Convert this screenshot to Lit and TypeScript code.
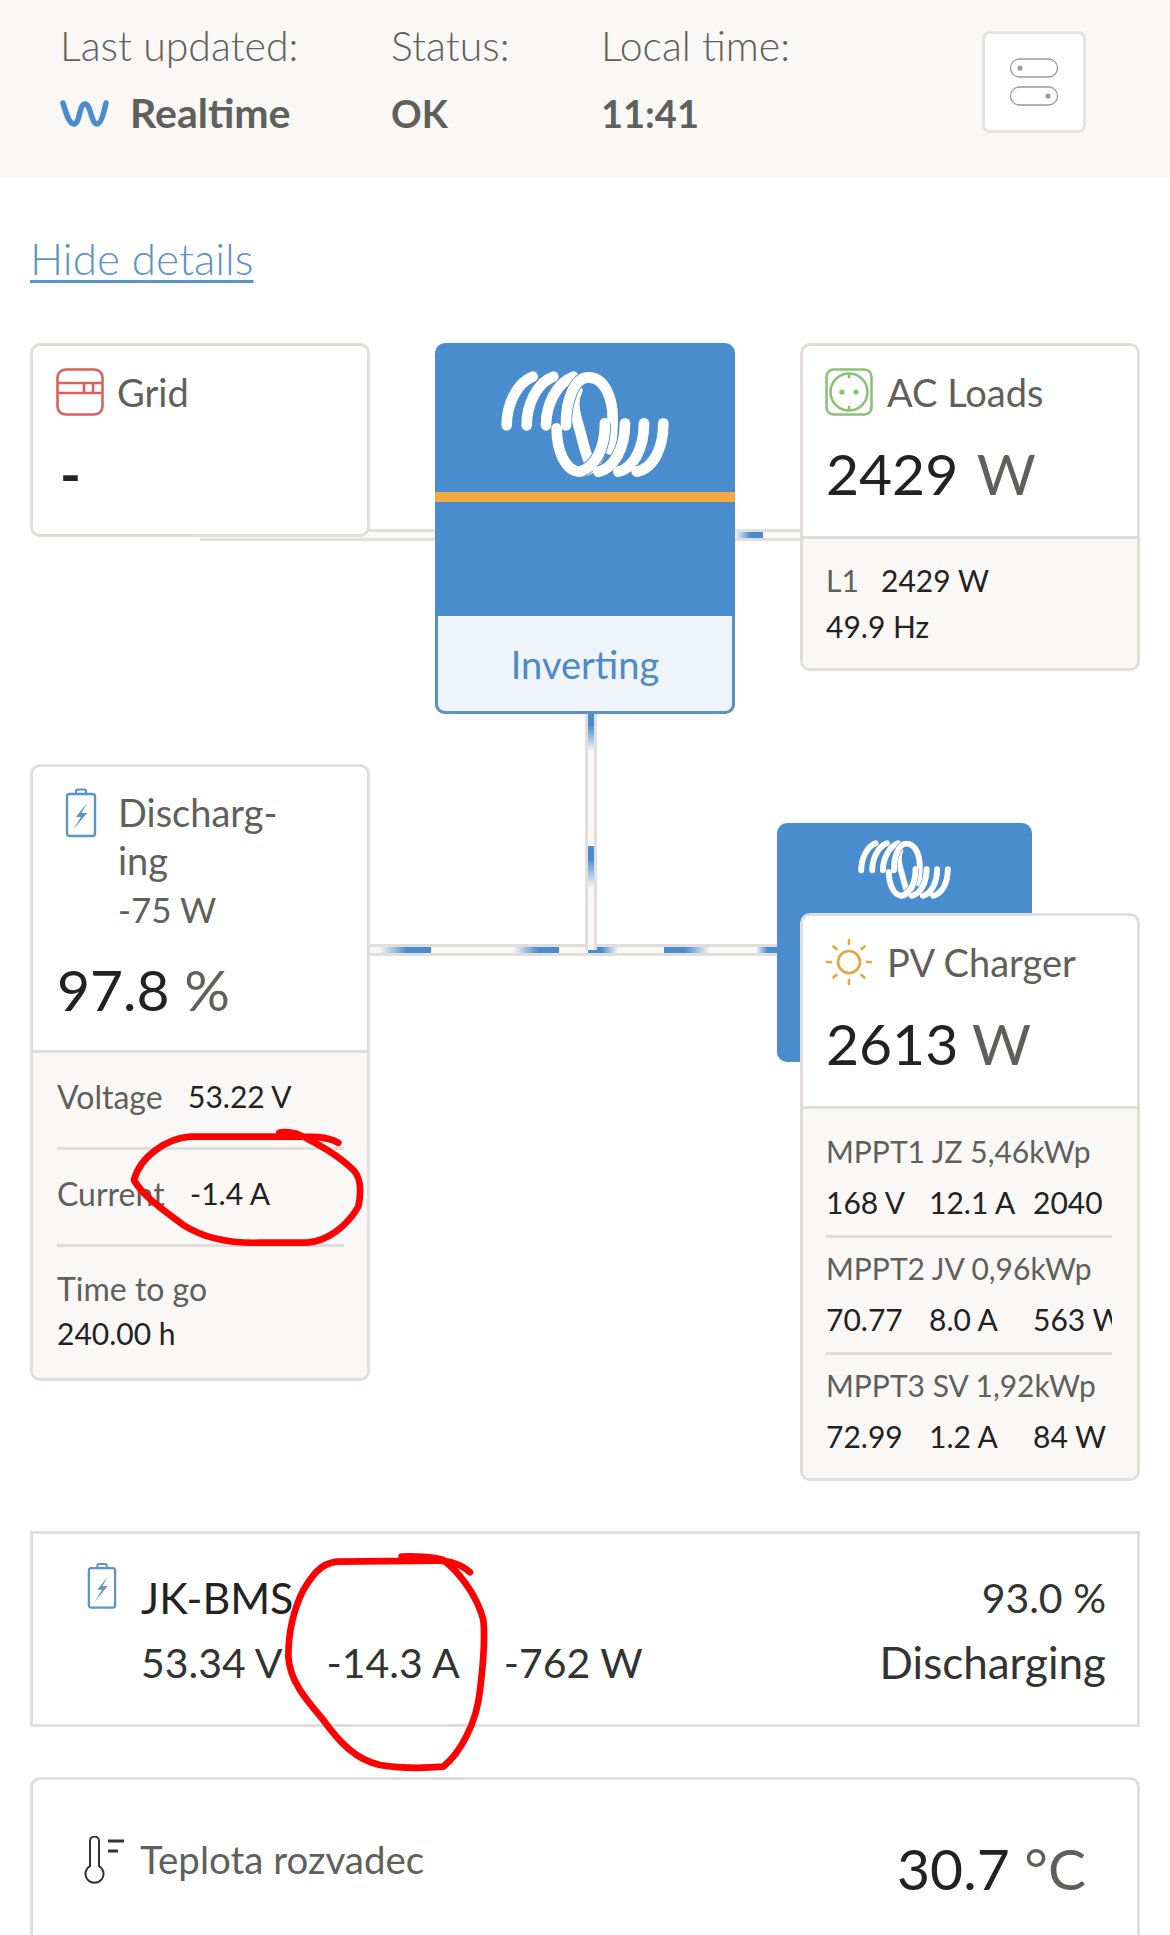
import { LitElement, html, css, svg } from "lit";
import { customElement } from "lit/decorators.js";

const logo = (cls: string) => {
  const strokes = [
    "M50 196 C50 135 80 68 128 50",
    "M110 196 C110 135 140 68 190 50",
    "M168 196 C168 135 200 68 250 50",
    "M200 205 C200 270 225 335 272 335 C315 335 346 270 345 190",
    "M262 92 C240 130 262 180 272 220 C282 260 290 290 300 312",
    "M228 196 C226 120 255 52 295 52 C345 52 368 115 368 175 C368 205 366 240 360 268",
    "M345 190 C345 262 318 320 270 335",
    "M405 190 C405 265 372 325 325 335",
    "M462 190 C462 265 430 325 385 335",
    "M520 190 C520 265 490 325 440 335",
  ];
  return html`<svg class=${cls} viewBox="0 0 570 390" fill="none" stroke-linecap="round">
    ${strokes.map(
      (d) => svg`<path d=${d} stroke="#4a8dce" stroke-width="37" stroke-linecap="butt"></path><path d=${d} stroke="#fff" stroke-width="32"></path>`
    )}
  </svg>`;
};

const batteryIcon = (cls: string) => html`<svg class=${cls} viewBox="0 0 32 50" fill="none">
  <path d="M11 6V3.5a2 2 0 0 1 2-2h6a2 2 0 0 1 2 2V6" stroke="#5b94c6" stroke-width="2.2"></path>
  <rect x="2" y="6" width="28" height="42" rx="2.5" stroke="#5b94c6" stroke-width="2.4"></rect>
  <path d="M22 15 L11 29 H16 L8 42 L22 25 H16.5 Z" fill="#5b94c6"></path>
</svg>`;

@customElement("app-root")
export class AppRoot extends LitElement {
  static styles = css`
    :host {
      display: block;
      position: relative;
      height: 1935px;
      overflow: hidden;
      background: #fff;
      font-family: "Lato", "Noto Sans", sans-serif;
      color: #222;
      box-sizing: border-box;
    }
    * { box-sizing: border-box; }
    .top {
      height: 177px;
      background: #f9f8f6;
      display: flex;
      padding: 24px 84px 0 60px;
      color: #5f5f5c;
      position: relative;
    }
    .col { display: flex; flex-direction: column; gap: 23px; font-size: 41px; font-weight: 300; line-height: 44px; }
    .col b { font-weight: 700; color: #5f5f5c; display: flex; align-items: center; gap: 21px; }
    .num { font-size: 38px; }
    .c1 { width: 331px; }
    .c2 { width: 210px; }
    .wave { width: 49px; height: 28px; }
    .toggle {
      margin-left: auto;
      margin-top: 7px;
      width: 104px;
      height: 102px;
      background: #fff;
      border: 3px solid #e4e3df;
      border-radius: 8px;
      display: flex;
      align-items: center;
      justify-content: center;
    }
    .toggle svg { width: 50px; height: 50px; }
    .hide {
      display: block;
      margin: 56px 0 0 30px;
      width: max-content;
      font-size: 44px;
      line-height: 50px;
      font-weight: 300;
      color: #5b94c6;
      text-decoration: underline;
      text-decoration-thickness: 3px;
      text-underline-offset: 5px;
    }
    .diagram {
      position: relative;
      margin-top: 60px;
      padding: 0 30px;
      display: grid;
      grid-template-columns: 340px 1fr 340px;
      height: 1138px;
      align-items: start;
    }
    .wire {
      position: absolute;
      background: #f9f8f6;
      border: 0 solid #e0dfdb;
      overflow: hidden;
    }
    .h { height: 12px; border-width: 3px 0; }
    .v { width: 12px; border-width: 0 3px; }
    .w1 { left: 200px; width: 235px; top: 186px; }
    .w2 { left: 735px; width: 65px; top: 186px; }
    .w3 { left: 370px; width: 407px; top: 601px; }
    .w4 { left: 585px; top: 371px; height: 236px; }
    .dash { position: absolute; top: 0; bottom: 0; }
    .v .dash { top: auto; bottom: auto; left: 0; right: 0; }
    .left, .right { display: flex; flex-direction: column; position: relative; }
    .left { gap: 227px; }
    .right { gap: 242px; }
    .card {
      position: relative;
      background: #fff;
      border: 3px solid #dfdedb;
      border-radius: 10px;
      overflow: hidden;
    }
    .head { padding: 22px 22px 0; display: flex; gap: 14px; align-items: flex-start; }
    .grid-card .head { padding-left: 23px; gap: 13px; }
    .icon { width: 48px; height: 48px; flex: none; }
    .name { font-size: 38px; line-height: 48px; color: #5f5f5c; font-weight: 400; }
    .name small { font-size: 35px; }
    .val { font-size: 57px; line-height: 72px; padding-left: 23px; font-weight: 400; color: #222; }
    .val span { color: #5f5f5c; font-weight: 400; }
    .ac .val span { margin-left: 4px; }
    .grid-card { height: 194px; }
    .grid-card .val { margin-top: 22px; padding-left: 27px; font-weight: 700; font-size: 56px; }
    .ac .val { margin-top: 21px; }
    .ac .top-part { height: 190px; }
    .sub {
      background: #f9f8f6;
      border-top: 3px solid #dfdedb;
      font-size: 30px;
      color: #222;
    }
    .muted { color: #5f5f5c; }
    .ac .sub { height: 132px; padding: 18px 23px 0; line-height: 46px; }
    .ac .sub .muted { display: inline-block; width: 55px; }
    .inverter {
      margin-left: 65px;
      width: 300px;
      height: 371px;
      position: relative;
      background: #4a8dce;
      border-radius: 10px;
      display: flex;
      flex-direction: column;
      overflow: hidden;
    }
    .inv-top { height: 159px; flex: none; border-bottom: 10px solid #f4a840; display: flex; justify-content: center; }
    .logo-big { width: 190px; height: 130px; margin-top: 17px; }
    .inv-mid { height: 114px; flex: none; }
    .inv-status {
      flex: 1;
      background: #eff4fb;
      color: #4e8ac4;
      font-size: 38px;
      display: flex;
      align-items: center;
      justify-content: center;
      border: 3px solid #5b90c4;
      border-top: 0;
      border-radius: 0 0 10px 10px;
    }
    .pv-wrap { position: relative; }
    .pv-blue {
      position: absolute;
      left: -23px;
      top: -90px;
      width: 255px;
      height: 239px;
      background: #4a8dce;
      border-radius: 10px;
      display: flex;
      justify-content: center;
    }
    .logo-small { width: 105px; height: 72px; margin-top: 11px; }
    .batt .head { padding: 21px 23px 0 32px; gap: 21px; }
    .batt .icon-b { width: 32px; height: 50px; flex: none; }
    .batt .name { line-height: 48px; }
    .batt .top-part { height: 283px; }
    .batt .val { margin-top: 20px; padding-left: 24px; }
    .batt .sub { padding: 0 23px 0 24px; height: 328px; }
    .kv { height: 97px; border-bottom: 3px solid #dfdedb; display: flex; align-items: center; padding-bottom: 8px; }
    .kv .muted { width: 131px; font-size: 32px; }
    .kv.second .muted { width: 133px; }
    .ttg { padding-top: 19px; line-height: 45px; }
    .ttg .muted { font-size: 32px; }
    .pv { z-index: 1; }
    .pv .top-part { height: 190px; }
    .pv .val { margin-top: 21px; }
    .pv .sub { padding: 21px 23px 0; height: 372px; }
    .mppt { border-bottom: 3px solid #dfdedb; height: 108px; margin-bottom: 9px; width: 286px; overflow: hidden; }
    .mppt:last-child { border-bottom: 0; }
    .mppt .muted { line-height: 42px; white-space: nowrap; }
    .mppt .vals { display: grid; grid-template-columns: 103px 104px 200px; line-height: 42px; white-space: nowrap; margin-top: 9px; }
    .bms {
      margin: 50px 30px 0;
      height: 196px;
      border: 3px solid #dfdedb;
      display: grid;
      grid-template-columns: 1fr auto;
      padding: 28px 31px 0 54px;
      font-size: 41px;
      line-height: 65px;
      font-weight: 400;
      color: #333;
    }
    .bms-left { display: flex; gap: 24px; }
    .bms-left .icon-b { width: 30px; height: 48px; flex: none; }
    .bms .n { font-size: 43px; margin-top: 3px; color: #222; }
    .bms .line { display: flex; gap: 44px; }
    .bms-right { text-align: right; margin-top: 3px; }
    .bms-right .state { font-size: 44px; }
    .temp {
      margin: 50px 30px 0;
      height: 300px;
      border: 3px solid #dfdedb;
      border-radius: 10px;
      display: flex;
      justify-content: space-between;
      padding: 51px 51px 0 51px;
    }
    .temp-left { display: flex; gap: 14px; font-size: 38.5px; color: #5f5f5c; line-height: 56px; }
    .temp-left svg { width: 42px; height: 50px; margin-top: 5px; }
    .temp .v2 { font-size: 57px; line-height: 72px; margin-top: 1px; }
    .temp .v2 span { color: #5f5f5c; }
    .ink { position: absolute; pointer-events: none; z-index: 5; }
    .ink1 { left: 120px; top: 1120px; width: 260px; height: 150px; }
    .ink2 { left: 280px; top: 1540px; width: 220px; height: 240px; }
  `;

  render() {
    const blue = "#4a8bcc";
    const dashH = (l: number, w: number, dir: string) =>
      html`<i class="dash" style="left:${l}px;width:${w}px;background:linear-gradient(${dir},${blue} 45%,rgba(74,139,204,0))"></i>`;
    const dashV = (t: number, h: number, dir: string) =>
      html`<i class="dash" style="top:${t}px;height:${h}px;background:linear-gradient(${dir},${blue} 30%,rgba(74,139,204,0))"></i>`;
    return html`
      <div class="top">
        <div class="col c1">
          <div>Last updated:</div>
          <b>
            <svg class="wave" viewBox="0 0 49 28" fill="none"><path d="M3 4 C6 14 9 25 14 25 C20 25 19 5 25 5 C31 5 31 25 37 25 C41 25 44 13 46 4" stroke="#4a8dce" stroke-width="5.5" stroke-linecap="round"></path></svg>
            Realtime
          </b>
        </div>
        <div class="col c2"><div>Status:</div><b class="num">OK</b></div>
        <div class="col"><div>Local time:</div><b class="num">11:41</b></div>
        <div class="toggle">
          <svg viewBox="0 0 50 50" fill="none" stroke="#999" stroke-width="1.3">
            <rect x="1.5" y="2" width="47" height="18" rx="9"></rect>
            <circle cx="11" cy="11" r="2.6" fill="#999" stroke="none"></circle>
            <rect x="1.5" y="30" width="47" height="18" rx="9"></rect>
            <circle cx="39" cy="39" r="2.6" fill="#999" stroke="none"></circle>
          </svg>
        </div>
      </div>

      <a class="hide">Hide details</a>

      <div class="diagram">
        <div class="wire h w1"></div>
        <div class="wire h w2">${dashH(0, 28, "to left")}</div>
        <div class="wire h w3">
          ${dashH(9, 52, "to left")}${dashH(143, 46, "to left")}
          ${dashH(218, 30, "to right")}${dashH(294, 46, "to right")}${dashH(386, 21, "to left")}
        </div>
        <div class="wire v w4">${dashV(0, 37, "to bottom")}${dashV(132, 42, "to bottom")}</div>

        <div class="left">
          <div class="card grid-card">
            <div class="head">
              <svg class="icon" viewBox="0 0 48 48" fill="none" stroke="#d9605c" stroke-width="2.6">
                <rect x="1.5" y="1.5" width="45" height="45" rx="8"></rect>
                <path d="M1.5 15H46.5M1.5 25H46.5M28 15V25M37 15V25"></path>
              </svg>
              <div class="name">Grid</div>
            </div>
            <div class="val">-</div>
          </div>
          <div class="card batt">
            <div class="top-part">
              <div class="head">
                ${batteryIcon("icon-b")}
                <div class="name">Discharg-<br />ing<br /><small>-75 W</small></div>
              </div>
              <div class="val">97.8 <span>%</span></div>
            </div>
            <div class="sub">
              <div class="kv"><span class="muted">Voltage</span><span>53.22 V</span></div>
              <div class="kv second"><span class="muted">Current</span><span>-1.4 A</span></div>
              <div class="ttg"><div class="muted">Time to go</div><div>240.00 h</div></div>
            </div>
          </div>
        </div>

        <div class="inverter">
          <div class="inv-top">${logo("logo-big")}</div>
          <div class="inv-mid"></div>
          <div class="inv-status">Inverting</div>
        </div>

        <div class="right">
          <div class="card ac">
            <div class="top-part">
              <div class="head">
                <svg class="icon" viewBox="0 0 48 48" fill="none" stroke="#8cc277" stroke-width="2.6">
                  <rect x="1.5" y="1.5" width="45" height="45" rx="7"></rect>
                  <circle cx="24" cy="24" r="18.5"></circle>
                  <path d="M24 5.5V10M24 38V42.5"></path>
                  <circle cx="17" cy="24" r="2.6" fill="#8cc277" stroke="none"></circle>
                  <circle cx="31" cy="24" r="2.6" fill="#8cc277" stroke="none"></circle>
                </svg>
                <div class="name">AC Loads</div>
              </div>
              <div class="val">2429 <span>W</span></div>
            </div>
            <div class="sub">
              <div><span class="muted">L1</span>2429 W</div>
              <div>49.9 Hz</div>
            </div>
          </div>
          <div class="pv-wrap">
            <div class="pv-blue">${logo("logo-small")}</div>
            <div class="card pv">
              <div class="top-part">
                <div class="head">
                  <svg class="icon" viewBox="0 0 48 48" fill="none" stroke="#e9a33f" stroke-width="2.6" stroke-linecap="round">
                    <circle cx="24" cy="24" r="11"></circle>
                    <path d="M24 2V6M24 42V46M2 24H6M42 24H46M8.5 8.5L11.5 11M36.5 37L39.5 39.5M8.5 39.5L11.5 37M36.5 11L39.5 8.5"></path>
                  </svg>
                  <div class="name">PV Charger</div>
                </div>
                <div class="val">2613 <span>W</span></div>
              </div>
              <div class="sub">
                <div class="mppt">
                  <div class="muted">MPPT1 JZ 5,46kWp</div>
                  <div class="vals"><span>168 V</span><span>12.1 A</span><span>2040</span></div>
                </div>
                <div class="mppt">
                  <div class="muted">MPPT2 JV 0,96kWp</div>
                  <div class="vals"><span>70.77</span><span>8.0 A</span><span>563 W</span></div>
                </div>
                <div class="mppt">
                  <div class="muted">MPPT3 SV 1,92kWp</div>
                  <div class="vals"><span>72.99</span><span>1.2 A</span><span>84 W</span></div>
                </div>
              </div>
            </div>
          </div>
        </div>
      </div>

      <div class="bms">
        <div class="bms-left">
          ${batteryIcon("icon-b")}
          <div>
            <div class="n">JK-BMS</div>
            <div class="line"><span>53.34 V</span><span>-14.3 A</span><span>-762 W</span></div>
          </div>
        </div>
        <div class="bms-right"><div>93.0 %</div><div class="state">Discharging</div></div>
      </div>

      <div class="temp">
        <div class="temp-left">
          <svg viewBox="0 0 42 50" fill="none" stroke="#333" stroke-width="2">
            <path d="M6 30V5a4.5 4.5 0 0 1 9 0V30a9 9 0 1 1-9 0Z"></path>
            <path d="M24 5H40M24 15H34" stroke-width="3"></path>
          </svg>
          <div>Teplota rozvadec</div>
        </div>
        <div class="v2">30.7 <span>°C</span></div>
      </div>

      <svg class="ink ink1" viewBox="0 0 780 450" fill="none" stroke="#f00" stroke-width="20" stroke-linecap="round" stroke-linejoin="round">
        <path d="M655 68C610 45 560 50 480 50L210 50C140 55 60 110 42 180C70 230 130 270 190 315C260 360 350 370 420 368L560 368C620 365 680 320 715 260C725 210 720 170 700 150C660 110 590 70 550 50C520 35 490 35 478 38"></path>
      </svg>
      <svg class="ink ink2" viewBox="0 0 660 720" fill="none" stroke="#f00" stroke-width="20" stroke-linecap="round" stroke-linejoin="round">
        <path d="M570 97C540 70 510 62 470 62L170 65C120 70 95 110 70 150C40 210 25 270 25 350C30 420 70 470 130 540C180 610 230 660 300 675C360 685 430 685 490 680C540 640 590 550 600 450C610 370 615 290 610 240C590 160 530 90 490 60C460 50 400 48 365 50"></path>
      </svg>
    `;
  }
}
